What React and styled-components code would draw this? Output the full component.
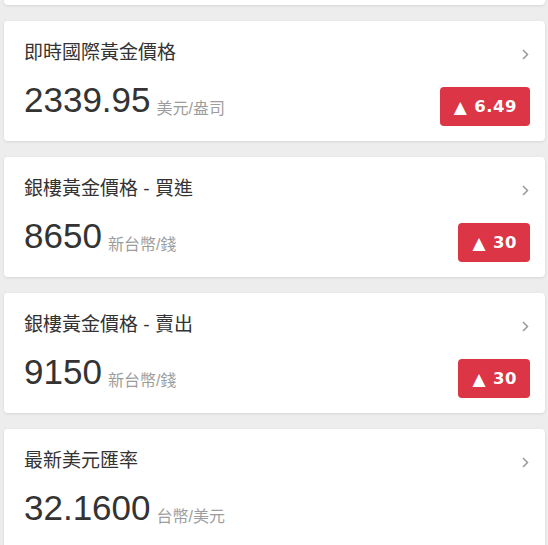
import React from "react";
import styled, { createGlobalStyle } from "styled-components";

const GlobalStyle = createGlobalStyle`
  html, body {
    margin: 0;
    padding: 0;
    overflow: hidden;
    background: #ededed;
  }
  body {
    font-family: "Liberation Sans", "Noto Sans CJK TC", Arial, sans-serif;
    color: #333;
  }
`;

const List = styled.div`
  display: flex;
  flex-direction: column;
  gap: 16px;
  padding: 0 3px 0 4px;
`;

const Card = styled.div`
  background: #fff;
  border-radius: 4px;
  box-shadow: 0 1px 3px rgba(0, 0, 0, 0.1);
  padding: 18px 15px 15px 20px;
  height: 120px;
  box-sizing: border-box;
  display: flex;
  flex-direction: column;
`;

const PreviousCardEdge = styled.div`
  background: #fff;
  height: 5px;
  border-radius: 0 0 4px 4px;
  box-shadow: 0 1px 3px rgba(0, 0, 0, 0.1);
`;

const TitleRow = styled.div`
  display: flex;
  align-items: center;
  justify-content: space-between;
  height: 28px;
`;

const Title = styled.div`
  font-size: 19px;
  line-height: 28px;
  color: #333;
`;

const Chevron = styled.svg`
  width: 7px;
  height: 11px;
  margin-right: 1px;
  margin-top: 2px;
`;

const ValueRow = styled.div`
  display: flex;
  align-items: flex-end;
  justify-content: space-between;
  margin-top: 15px;
  height: 44px;
`;

const Amount = styled.div`
  display: flex;
  align-items: baseline;
  padding-bottom: 9px;
`;

const Number = styled.span`
  font-family: "Liberation Sans", Arial, sans-serif;
  font-size: 35px;
  line-height: 35px;
  color: #333;
`;

const Unit = styled.span`
  font-size: 16px;
  color: #9d9d9d;
  margin-left: 6px;
  position: relative;
  top: 2px;
`;

const Badge = styled.div`
  background: #dc3545;
  color: #fff;
  border-radius: 4px;
  height: 39px;
  padding: 0 13px 0 14px;
  box-sizing: border-box;
  display: flex;
  align-items: center;
  gap: 7px;
  font-family: "DejaVu Sans", Verdana, sans-serif;
  font-weight: bold;
  font-size: 16.5px;
  letter-spacing: 0.5px;
  white-space: nowrap;
`;

const Arrow = styled.span`
  font-size: 17px;
`;

const items = [
  { title: "即時國際黃金價格", value: "2339.95", unit: "美元/盎司", change: "6.49" },
  { title: "銀樓黃金價格 - 買進", value: "8650", unit: "新台幣/錢", change: "30" },
  { title: "銀樓黃金價格 - 賣出", value: "9150", unit: "新台幣/錢", change: "30" },
  { title: "最新美元匯率", value: "32.1600", unit: "台幣/美元" },
];

export default function App() {
  return (
    <>
      <GlobalStyle />
      <List>
        <PreviousCardEdge />
        {items.map((it) => (
          <Card key={it.title}>
            <TitleRow>
              <Title>{it.title}</Title>
              <Chevron viewBox="0 0 7 11">
                <polyline
                  points="1,1 5.5,5.5 1,10"
                  fill="none"
                  stroke="#999"
                  strokeWidth="1.5"
                />
              </Chevron>
            </TitleRow>
            <ValueRow>
              <Amount>
                <Number>{it.value}</Number>
                <Unit>{it.unit}</Unit>
              </Amount>
              {it.change && (
                <Badge>
                  <Arrow>▲</Arrow>
                  {it.change}
                </Badge>
              )}
            </ValueRow>
          </Card>
        ))}
      </List>
    </>
  );
}
